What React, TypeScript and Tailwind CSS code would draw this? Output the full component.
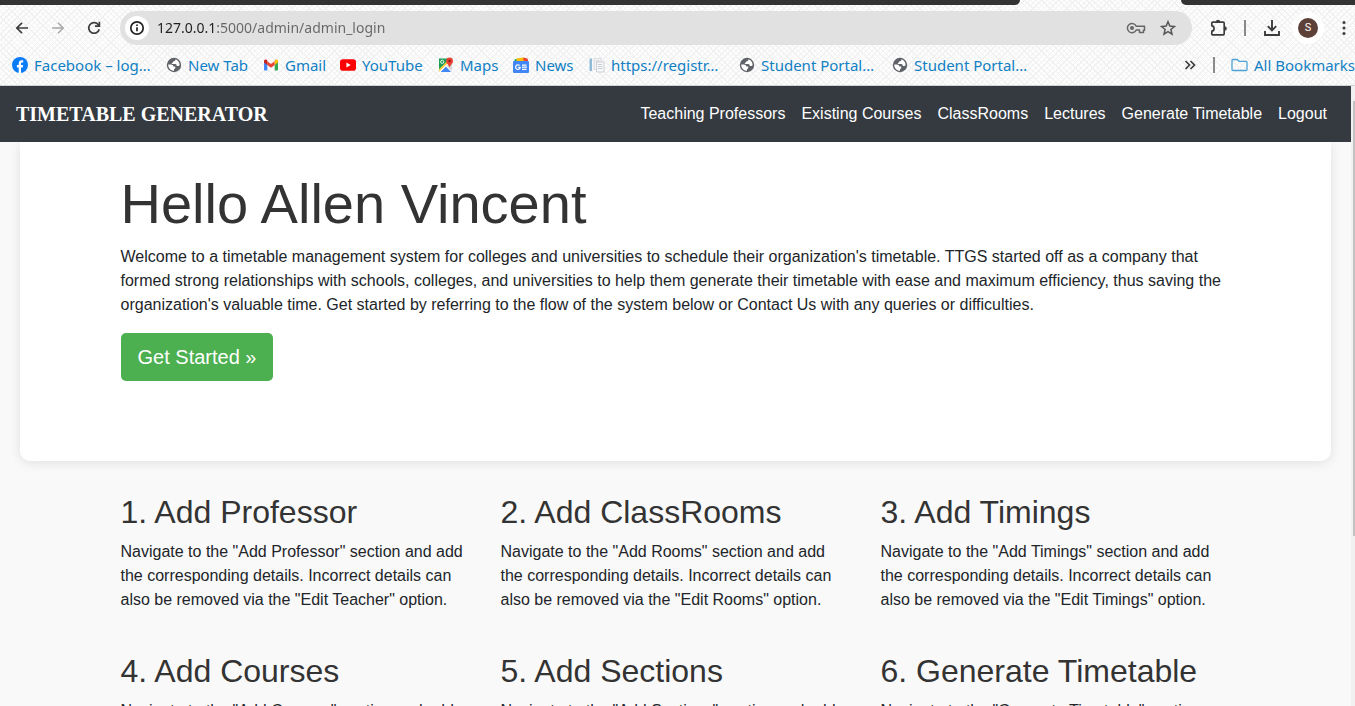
import React from "react";

const link = "text-[#1080c4]";

function BackIcon() {
  return (
    <svg width="16" height="16" viewBox="0 0 16 16" fill="none" stroke="currentColor" strokeWidth="1.7">
      <path d="M14 8H3M8 2.8 2.8 8 8 13.2" />
    </svg>
  );
}

function ForwardIcon() {
  return (
    <svg width="16" height="16" viewBox="0 0 16 16" fill="none" stroke="currentColor" strokeWidth="1.5">
      <path d="M2 8h11M8 2.8 13.2 8 8 13.2" />
    </svg>
  );
}

function ReloadIcon() {
  return (
    <svg width="16" height="16" viewBox="0 0 16 16" fill="none" stroke="currentColor" strokeWidth="1.7">
      <path d="M13.2 9.2A5.3 5.3 0 1 1 12 4.4L13.4 6" />
      <path d="M13.4 1.8v4.4H9" />
    </svg>
  );
}

function InfoIcon() {
  return (
    <svg width="16" height="16" viewBox="0 0 16 16" fill="none" stroke="currentColor" strokeWidth="1.7">
      <circle cx="8" cy="8" r="6.2" />
      <path d="M8 7.2v4M8 4.4v1.7" />
    </svg>
  );
}

function KeyIcon() {
  return (
    <svg width="20" height="16" viewBox="0 0 20 16" fill="none" stroke="currentColor" strokeWidth="1.5">
      <path d="M10.2 6.2a4.6 4.6 0 1 0 0 3.8h3.3v2.4h4V10.2h1V6.2Z" strokeLinejoin="round" />
      <circle cx="6" cy="8" r="2" fill="currentColor" stroke="none" />
    </svg>
  );
}

function StarIcon() {
  return (
    <svg width="18" height="18" viewBox="0 0 18 18" fill="none" stroke="currentColor" strokeWidth="1.5">
      <path d="m9 2.8 1.8 4.3 4.6.4-3.5 3 1.1 4.6L9 12.7l-4 2.4 1.1-4.6-3.5-3 4.6-.4Z" />
    </svg>
  );
}

function PuzzleIcon() {
  return (
    <svg width="18" height="18" viewBox="0 0 18 18" fill="none" stroke="currentColor" strokeWidth="1.7">
      <path d="M2.8 3.2h10.4c.6 0 1 .4 1 1v10.6c0 .6-.4 1-1 1H2.8c-.6 0-1-.4-1-1v-2.6c3-.4 3-5 0-5.4V4.2c0-.6.4-1 1-1Z" strokeLinejoin="round" />
      <path d="M5.8 3a2.2 2.2 0 0 1 4.4 0ZM14.6 7.2a2.2 2.2 0 0 1 0 4.4Z" fill="currentColor" stroke="none" />
    </svg>
  );
}

function DownloadIcon() {
  return (
    <svg width="18" height="18" viewBox="0 0 18 18" fill="none" stroke="currentColor" strokeWidth="1.9">
      <path d="M9 1v10M4.8 7.2 9 11.4l4.2-4.2M2 12v4h14v-4" />
    </svg>
  );
}

function FacebookIcon() {
  return (
    <svg width="16" height="16" viewBox="0 0 16 16">
      <circle cx="8" cy="8" r="8" fill="#0a7cf5" />
      <path d="M6.7 16v-5.4H4.9V8h1.8V6.7c0-2.4 1.2-3.5 3.2-3.5.6 0 1 .1 1.3.2v2.1h-1c-.9 0-1.2.5-1.2 1.3V8h2.1l-.4 2.6H9V16Z" fill="#fff" />
    </svg>
  );
}

function GlobeIcon() {
  return (
    <svg width="16" height="16" viewBox="0 0 16 16">
      <circle cx="8" cy="8" r="7.2" fill="#5f6368" />
      <path d="M9.4 2.3c.3 1.3-.4 1.7-1.5 1.9-1 .2-.7 1.2-1.6 1.5-.8.3-.6 1.4.3 1.4h2.6c1.2 0 1.5.8 1.5 1.8h1.6c.9 0 1.2-.4 1.3-1.2-.2-2.6-1.9-4.7-4.2-5.4Z" fill="#fff" />
      <path d="M2.2 7.4h2.6c1.7 0 2.5.9 2.5 2.2h1.9v1.5c0 .6-.5.9-1.2.9v1.8C4.7 13.7 2.1 11 2.2 7.4Z" fill="#fff" />
    </svg>
  );
}

function GmailIcon() {
  return (
    <svg width="16" height="16" viewBox="0 0 16 16">
      <path d="M1 4v8.5c0 .6.4 1 1 1h2.3V7Z" fill="#4285f4" />
      <path d="M15 4v8.5c0 .6-.4 1-1 1h-2.3V7Z" fill="#34a853" />
      <path d="M4.3 4.2 8 7l3.7-2.8V8L8 10.8 4.3 8Z" fill="#ea4335" />
      <path d="M1 4c0-1.5 1.6-2 2.6-1.2l.7.5V8L1 5.5Z" fill="#c5221f" />
      <path d="M15 4c0-1.5-1.6-2-2.6-1.2l-.7.5V8L15 5.5Z" fill="#fbbc04" />
    </svg>
  );
}

function YouTubeIcon() {
  return (
    <svg width="16" height="16" viewBox="0 0 16 16">
      <rect y="2.3" width="16" height="11.4" rx="2.8" fill="#f00" />
      <path d="m6.4 5.5 4.3 2.5-4.3 2.5Z" fill="#fff" />
    </svg>
  );
}

function MapsIcon() {
  return (
    <svg width="16" height="16" viewBox="0 0 16 16">
      <path d="M1 1.5h11L2 14H1Z" fill="#1f9d55" />
      <path d="m2.5 15 5.2-5.4L13 15Z" fill="#4285f4" />
      <path d="m1 12.5 9.5-9.5 1 2.5L2.5 15H1Z" fill="#fff" />
      <path d="m1 12.5 8.5-8.5.8 1.6L1 14.8Z" fill="#fbc928" />
      <path d="m8.7 8.7 5.3 5.5V7Z" fill="#d5d8dc" />
      <circle cx="4.2" cy="4.8" r="1.6" fill="none" stroke="#fff" strokeWidth="0.9" />
      <path d="M11.6 11C11.2 8 8.2 7 8.2 4a3.4 3.4 0 0 1 6.8 0c0 3-3 4-3.4 7Z" fill="#ea4335" />
      <circle cx="11.6" cy="4" r="1.2" fill="#8c1d18" />
    </svg>
  );
}

function NewsIcon() {
  return (
    <svg width="16" height="16" viewBox="0 0 16 16">
      <path d="M1.5 2.5 9 1v4H1.5Z" fill="#0f9d58" />
      <path d="m8 1 7 1.5V5H8Z" fill="#ea4335" />
      <path d="M3.5 1.5 11 .5l1 4.5H3.5Z" fill="#fbbc04" />
      <path d="m10 .5 4.5 1v3.5H11Z" fill="#ea4335" />
      <rect y="4" width="16" height="12" rx="1" fill="#4285f4" />
      <path d="M6.6 8.5a2.3 2.3 0 1 0 .6 1.9H5.2M9 8.1h4.5M9 10.2h5M9 12.3h4.5" fill="none" stroke="#fff" strokeWidth="1.2" />
    </svg>
  );
}

function DocumentIcon() {
  return (
    <svg width="16" height="16" viewBox="0 0 16 16">
      <path d="M.5 1.5H3V14H.5Z" fill="#8dbbd8" />
      <path d="M5 1.5h7v11H5Z" fill="#f3f4f6" stroke="#d3d6da" strokeWidth="0.8" />
      <path d="M7.5 5H15v10H7.5Z" fill="#f7f8f9" stroke="#c3c7cc" strokeWidth="0.8" />
      <path d="M6.5 4h4M9 7.5h4M9 9.5h4.500M9 11.5h4.500" stroke="#bcc1c8" strokeWidth="0.8" />
    </svg>
  );
}

function FolderIcon() {
  return (
    <svg width="17" height="16" viewBox="0 0 17 16" fill="none" stroke="#4ba3d8" strokeWidth="1.3">
      <path d="M1 3.5c0-.6.4-1 1-1h4.2l1.8 1.8h7c.6 0 1 .4 1 1v7.2c0 .6-.4 1-1 1H2c-.6 0-1-.4-1-1Z" />
    </svg>
  );
}

const bookmarks = [
  { title: "Facebook – log…", icon: <FacebookIcon />, width: "w-[138px]" },
  { title: "New Tab", icon: <GlobeIcon />, width: "w-[81px]" },
  { title: "Gmail", icon: <GmailIcon />, width: "w-[61px]" },
  { title: "YouTube", icon: <YouTubeIcon />, width: "w-[82px]" },
  { title: "Maps", icon: <MapsIcon />, width: "w-[59px]" },
  { title: "News", icon: <NewsIcon />, width: "w-[60px]" },
  { title: "https://registr…", icon: <DocumentIcon />, width: "w-[134px]" },
  { title: "Student Portal…", icon: <GlobeIcon />, width: "w-[137px]" },
  { title: "Student Portal…", icon: <GlobeIcon />, width: "w-[137px]" },
];

const navLinks = ["Teaching Professors", "Existing Courses", "ClassRooms", "Lectures", "Generate Timetable", "Logout"];

const steps = [
  { title: "1. Add Professor", section: "Add Professor", option: "Edit Teacher" },
  { title: "2. Add ClassRooms", section: "Add Rooms", option: "Edit Rooms" },
  { title: "3. Add Timings", section: "Add Timings", option: "Edit Timings" },
  { title: "4. Add Courses", section: "Add Courses", option: "Edit Courses" },
  { title: "5. Add Sections", section: "Add Sections", option: "Edit Sections" },
  { title: "6. Generate Timetable", section: "Generate Timetable", option: "Edit Timetable" },
];

function BrowserChrome() {
  return (
    <header className="shrink-0 border-b border-[#cfd2d2] bg-[#fdfdfd] bg-[repeating-linear-gradient(45deg,#f1f1f1_0px,#f1f1f1_1px,transparent_1px,transparent_4px),repeating-linear-gradient(135deg,#f1f1f1_0px,#f1f1f1_1px,transparent_1px,transparent_4px)] font-['Noto_Sans',sans-serif]">
      <div className="flex h-[5px] justify-between">
        <div className="w-[1020px] rounded-br-lg bg-[#333]" />
        <div className="w-[174px] rounded-bl-lg bg-[#333]" />
      </div>
      <div className="flex h-[46px] items-center pr-1.5 pl-3.5 text-[#3c3c3c]">
        <button aria-label="Back"><BackIcon /></button>
        <button aria-label="Forward" className="ml-5 text-[#a8a8a8]"><ForwardIcon /></button>
        <button aria-label="Reload" className="ml-5"><ReloadIcon /></button>
        <div className="ml-[18px] flex h-[34px] min-w-0 flex-1 items-center rounded-full bg-[#e1e1e1] pr-[15px] pl-[5px]">
          <button aria-label="Site information" className="grid size-6 place-items-center rounded-full bg-white text-[#222]"><InfoIcon /></button>
          {/* The gradient darkens the host part of the address. */}
          <input
            type="text"
            aria-label="Address"
            defaultValue="127.0.0.1:5000/admin/admin_login"
            className="ml-2 min-w-0 flex-1 bg-[linear-gradient(90deg,#1f1f1f_59px,#666_59px)] bg-clip-text text-sm text-transparent caret-black outline-none"
          />
          <button aria-label="Passwords" className="text-[#666]"><KeyIcon /></button>
          <button aria-label="Bookmark this page" className="ml-[13px] text-[#555]"><StarIcon /></button>
        </div>
        <button aria-label="Extensions" className="ml-[18px]"><PuzzleIcon /></button>
        <span className="ml-4 h-4 w-[2px] bg-[#8a8a8a]" />
        <button aria-label="Downloads" className="ml-[17px]"><DownloadIcon /></button>
        <button aria-label="Profile" className="ml-[11px] grid size-8 place-items-center rounded-full bg-white">
          <span className="grid size-5 place-items-center rounded-full bg-[#5d4037] font-['Roboto',sans-serif] text-[11px] text-white">S</span>
        </button>
        <button aria-label="Menu" className="ml-[15px]">
          <svg width="10" height="16" viewBox="0 0 10 16" fill="currentColor">
            <circle cx="5" cy="2.5" r="1.5" /><circle cx="5" cy="8" r="1.5" /><circle cx="5" cy="13.5" r="1.5" />
          </svg>
        </button>
      </div>
      <div className="flex h-[34px] items-start pt-0.5 pl-3 text-[15px] leading-6">
        <nav aria-label="Bookmarks" className="flex gap-4">
          {bookmarks.map((b, i) => (
            <a key={i} href="#" className={`flex items-center gap-1.5 whitespace-nowrap ${link} ${b.width}`}>
              <span className="shrink-0">{b.icon}</span>
              {b.title}
            </a>
          ))}
        </nav>
        <button aria-label="More bookmarks" className="mt-1 ml-auto text-[#3c3c3c]">
          <svg width="14" height="16" viewBox="0 0 14 16" fill="none" stroke="currentColor" strokeWidth="1.7">
            <path d="m2.5 4 4 4-4 4M7.5 4l4 4-4 4" />
          </svg>
        </button>
        <span className="mt-1 ml-4 h-4 w-[2px] bg-[#8a8a8a]" />
        <a href="#" className={`ml-4 flex items-center gap-1.5 whitespace-nowrap ${link}`}>
          <FolderIcon />
          All Bookmarks
        </a>
      </div>
    </header>
  );
}

export default function App() {
  return (
    <div className="flex h-screen flex-col overflow-hidden font-['Liberation_Sans',Arial,sans-serif] text-base text-[#212529]">
      <BrowserChrome />
      <div className="flex min-h-0 flex-1 bg-[#f9f9f9]">
        <div className="min-w-0 flex-1 overflow-hidden">
          <nav className="relative flex h-14 items-center justify-between bg-[#343a40] pr-6 pl-4 text-white">
            <a href="#" className="font-['Liberation_Serif',serif] text-xl font-bold">TIMETABLE GENERATOR</a>
            <div className="flex gap-4">
              {navLinks.map((n) => (
                <a key={n} href="#">{n}</a>
              ))}
            </div>
          </nav>
          <main>
            <section className="mx-5 rounded-b-[10px] bg-white pt-7 pb-20 shadow-[0_2px_12px_rgba(0,0,0,0.1)]">
              <div className="mx-auto max-w-[1140px] px-[15px]">
                <h1 className="mb-2 text-[56px] leading-[67px] text-[#333]">Hello Allen Vincent</h1>
                <p className="mb-4">
                  Welcome to a timetable management system for colleges and universities to schedule their organization's timetable. TTGS started off as a company that formed strong relationships with schools, colleges, and universities to help them generate their timetable with ease and maximum efficiency, thus saving the organization's valuable time. Get started by referring to the flow of the system below or Contact Us with any queries or difficulties.
                </p>
                <a href="#steps" className="flex h-12 w-fit items-center rounded-[5px] bg-[#4caf50] px-[17px] text-xl text-white">Get Started »</a>
              </div>
            </section>
            <section id="steps" className="mx-auto mt-8 grid max-w-[1140px] grid-cols-3 gap-y-10">
              {steps.map((s) => (
                <article key={s.title} className="px-[15px]">
                  <h2 className="mb-2 text-[32px] leading-[39px] text-[#333]">{s.title}</h2>
                  <p>
                    {`Navigate to the "${s.section}" section and add the corresponding details. Incorrect details can also be removed via the "${s.option}" option.`}
                  </p>
                </article>
              ))}
            </section>
          </main>
        </div>
        <div className="flex w-1 justify-end bg-[#f1f1f1] pt-[15px]">
          <div className="h-[435px] w-[2px] bg-[#c1c1c1]" />
        </div>
      </div>
    </div>
  );
}
